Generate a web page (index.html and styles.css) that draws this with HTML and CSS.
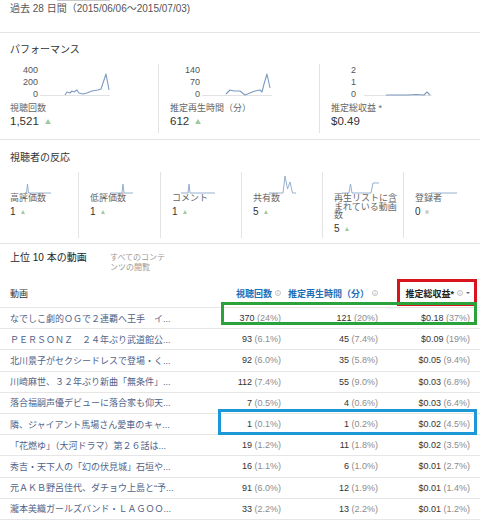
FILE: index.html
```html
<!DOCTYPE html>
<html lang="ja">
<head>
<meta charset="utf-8">
<title>アナリティクス</title>
<link rel="stylesheet" href="styles.css">
</head>
<body>
<header class="period">
  <div class="period-cut"></div>
  <div class="period-text">過去 28 日間（2015/06/06～2015/07/03)</div>
</header>

<section class="card perf">
  <h2 class="card-title">パフォーマンス</h2>
  <div class="perf-grid">
    <div class="perf-col">
      <div class="chart">
        <div class="axis axis-a"><span>400</span><span>200</span><span>0</span></div>
        <svg class="spark" width="72" height="36" viewBox="0 0 72 36">
          <line class="base" x1="0" y1="31.5" x2="70" y2="31.5"/>
          <polyline class="trend" points="25,31 27,28 30,29 32,27 34,28 37,26 39,29 43,30 47,29 52,27 58,26 61,25 66,10 69,26"/>
        </svg>
      </div>
      <div class="metric-label">視聴回数</div>
      <div class="metric-value">1,521<span class="up"></span></div>
    </div>
    <div class="perf-col">
      <div class="chart">
        <div class="axis axis-b"><span>140</span><span>70</span><span>0</span></div>
        <svg class="spark" width="72" height="36" viewBox="0 0 72 36">
          <line class="base" x1="0" y1="31.5" x2="70" y2="31.5"/>
          <polyline class="trend" points="24,30 28,26 32,27 38,27 43,31 48,29 53,27 58,26 60,28 62,20 65,10 68,24"/>
        </svg>
      </div>
      <div class="metric-label">推定再生時間（分）</div>
      <div class="metric-value">612<span class="up"></span></div>
    </div>
    <div class="perf-col">
      <div class="chart">
        <div class="axis axis-c"><span>2</span><span>1</span><span>0</span></div>
        <svg class="spark" width="78" height="36" viewBox="0 0 78 36">
          <line class="base" x1="6" y1="31.5" x2="74" y2="31.5"/>
          <polyline class="trend" points="28,31 50,31 58,30.5 66,31 69,28 72,31"/>
        </svg>
      </div>
      <div class="metric-label">推定総収益 *</div>
      <div class="metric-value">$0.49</div>
    </div>
  </div>
</section>

<section class="card engage">
  <h2 class="card-title">視聴者の反応</h2>
  <div class="engage-grid">
    <div class="eng-col">
      <svg class="mini" width="60" height="22" viewBox="0 0 60 22">
        <polyline points="15,21 16.5,21 17.5,12 18.5,21 41,21"/>
      </svg>
      <div class="eng-label">高評価数</div>
      <div class="eng-value">1<span class="up small"></span></div>
    </div>
    <div class="eng-col">
      <svg class="mini" width="60" height="22" viewBox="0 0 60 22">
        <polyline points="20,21 32,21 33,12 34,21 43,21"/>
      </svg>
      <div class="eng-label">低評価数</div>
      <div class="eng-value">1<span class="up small"></span></div>
    </div>
    <div class="eng-col">
      <svg class="mini" width="60" height="22" viewBox="0 0 60 22">
        <polyline points="9,21 16,21 17,12 18,21 43,21"/>
      </svg>
      <div class="eng-label">コメント</div>
      <div class="eng-value">1<span class="up small"></span></div>
    </div>
    <div class="eng-col">
      <svg class="mini" width="60" height="22" viewBox="0 0 60 22">
        <polyline points="16,21 30,21 32,4 34.5,17 37,10 39.5,21 43,21"/>
      </svg>
      <div class="eng-label">共有数</div>
      <div class="eng-value">5<span class="up small"></span></div>
    </div>
    <div class="eng-col">
      <svg class="mini" width="60" height="22" viewBox="0 0 60 22">
        <polyline points="8,21 15,21 16.5,12 18,21 37,21 39,11 45,11"/>
      </svg>
      <div class="eng-label">再生リストに含まれている動画数</div>
      <div class="eng-value">5<span class="up small"></span></div>
    </div>
    <div class="eng-col">
      <svg class="mini" width="60" height="22" viewBox="0 0 60 22">
        <polyline points="16,21 42,21"/>
      </svg>
      <div class="eng-label">登録者</div>
      <div class="eng-value">0<span class="dot"></span></div>
    </div>
  </div>
</section>

<section class="top-head">
  <h2 class="top-title">上位 10 本の動画</h2>
  <div class="top-tab">すべてのコンテンツの閲覧</div>
</section>

<section class="videos">
  <div class="vrow vhead">
    <div class="hd">動画</div>
    <div class="hd num hd-blue">視聴回数<svg class="info" width="6" height="6" viewBox="0 0 6 6"><circle cx="3" cy="3" r="2.5"/><line x1="3" y1="2.6" x2="3" y2="4.5"/><line x1="3" y1="1.4" x2="3" y2="1.9"/></svg></div>
    <div class="hd num hd-blue">推定再生時間（分）<svg class="info" width="6" height="6" viewBox="0 0 6 6"><circle cx="3" cy="3" r="2.5"/><line x1="3" y1="2.6" x2="3" y2="4.5"/><line x1="3" y1="1.4" x2="3" y2="1.9"/></svg></div>
    <div class="hd num hd-dark">推定総収益*<svg class="info" width="6" height="6" viewBox="0 0 6 6"><circle cx="3" cy="3" r="2.5"/><line x1="3" y1="2.6" x2="3" y2="4.5"/><line x1="3" y1="1.4" x2="3" y2="1.9"/></svg><span class="caret"></span></div>
  </div>

  <div class="vrow item"><div class="vt">なでしこ劇的ＯＧで２連覇へ王手　イ...</div><div class="num">370 <span class="pct">(24%)</span></div><div class="num">121 <span class="pct">(20%)</span></div><div class="num">$0.18 <span class="pct">(37%)</span></div></div>
  <div class="vrow item"><div class="vt">ＰＥＲＳＯＮＺ　２４年ぶり武道館公...</div><div class="num">93 <span class="pct">(6.1%)</span></div><div class="num">45 <span class="pct">(7.4%)</span></div><div class="num">$0.09 <span class="pct">(19%)</span></div></div>
  <div class="vrow item"><div class="vt">北川景子がセクシードレスで登場・く...</div><div class="num">92 <span class="pct">(6.0%)</span></div><div class="num">35 <span class="pct">(5.8%)</span></div><div class="num">$0.05 <span class="pct">(9.4%)</span></div></div>
  <div class="vrow item"><div class="vt">川崎麻世、３２年ぶり新曲「無条件」...</div><div class="num">112 <span class="pct">(7.4%)</span></div><div class="num">55 <span class="pct">(9.0%)</span></div><div class="num">$0.03 <span class="pct">(6.8%)</span></div></div>
  <div class="vrow item"><div class="vt">落合福嗣声優デビューに落合家も仰天...</div><div class="num">7 <span class="pct">(0.5%)</span></div><div class="num">4 <span class="pct">(0.6%)</span></div><div class="num">$0.03 <span class="pct">(6.4%)</span></div></div>
  <div class="vrow item"><div class="vt">隣、ジャイアント馬場さん愛車のキャ...</div><div class="num">1 <span class="pct">(0.1%)</span></div><div class="num">1 <span class="pct">(0.2%)</span></div><div class="num">$0.02 <span class="pct">(4.5%)</span></div></div>
  <div class="vrow item"><div class="vt">「花燃ゆ」（大河ドラマ）第２６話は...</div><div class="num">19 <span class="pct">(1.2%)</span></div><div class="num">11 <span class="pct">(1.8%)</span></div><div class="num">$0.02 <span class="pct">(3.5%)</span></div></div>
  <div class="vrow item"><div class="vt">秀吉・天下人の「幻の伏見城」石垣や...</div><div class="num">16 <span class="pct">(1.1%)</span></div><div class="num">6 <span class="pct">(1.0%)</span></div><div class="num">$0.01 <span class="pct">(2.7%)</span></div></div>
  <div class="vrow item"><div class="vt">元ＡＫＢ野呂佳代、ダチョウ上島と“予...</div><div class="num">91 <span class="pct">(6.0%)</span></div><div class="num">12 <span class="pct">(1.9%)</span></div><div class="num">$0.01 <span class="pct">(1.4%)</span></div></div>
  <div class="vrow item last"><div class="vt">瀧本美織ガールズバンド・ＬＡＧＯＯ...</div><div class="num">33 <span class="pct">(2.2%)</span></div><div class="num">13 <span class="pct">(2.2%)</span></div><div class="num">$0.01 <span class="pct">(1.2%)</span></div></div>

  <div class="mark mark-red"></div>
  <div class="mark mark-green"></div>
  <div class="mark mark-blue"></div>
</section>
</body>
</html>
```

FILE: styles.css
```css
* { box-sizing: border-box; }

html, body { margin: 0; padding: 0; }

body {
  width: 480px;
  height: 526px;
  overflow: hidden;
  background: #fff;
  color: #333;
  font-family: "Liberation Sans", Arial, "Noto Sans CJK JP", sans-serif;
}

/* period header */
.period {
  height: 33px;
  border-bottom: 1px solid #e3e3e3;
  padding-left: 10px;
}
.period-cut {
  height: 1px;
  width: 53px;
  margin-left: 47px;
  background: #c9c9c9;
}
.period-text {
  font-size: 10px;
  line-height: 16px;
  color: #555;
}

/* cards */
.card {
  border-bottom: 1px solid #e3e3e3;
  padding-left: 10px;
}
.card-title {
  margin: 0;
  font-size: 10px;
  font-weight: normal;
  line-height: 14px;
  color: #333;
}

/* performance */
.perf {
  height: 107px;
  padding-top: 10px;
}
.perf-grid {
  margin-top: 7px;
  height: 69px;
  display: grid;
  grid-template-columns: 148px 161px 1fr;
}
.perf-col + .perf-col {
  border-left: 1px solid #e3e3e3;
  padding-left: 11px;
}
.chart {
  display: flex;
  height: 36px;
}
.axis {
  display: flex;
  flex-direction: column;
  text-align: right;
  font-size: 9px;
  line-height: 12px;
  color: #555;
}
.axis-a { width: 28px; }
.axis-b { width: 30px; }
.axis-c { width: 25px; }
.spark { display: block; margin-left: 2px; }
.spark .base { stroke: #e2e2e2; stroke-width: 1; }
.spark .trend { fill: none; stroke: #7d9bc0; stroke-width: 1.1; stroke-linejoin: round; }

.metric-label {
  margin-top: 2px;
  font-size: 9px;
  line-height: 12px;
  color: #666;
}
.metric-value {
  font-size: 11.5px;
  line-height: 14px;
  color: #333;
}

.up {
  display: inline-block;
  width: 0;
  height: 0;
  margin-left: 6px;
  border-left: 3px solid transparent;
  border-right: 3px solid transparent;
  border-bottom: 5px solid #9fcc9f;
  vertical-align: 1px;
}
.up.small {
  margin-left: 5px;
  border-left-width: 2.5px;
  border-right-width: 2.5px;
  border-bottom-width: 4.5px;
}
.dot {
  display: inline-block;
  width: 4px;
  height: 4px;
  margin-left: 4px;
  border-radius: 50%;
  background: #cfcfcf;
  vertical-align: 1px;
}

/* engagement */
.engage {
  height: 104px;
  padding-top: 11px;
}
.engage-grid {
  margin-top: 7px;
  height: 66px;
  display: grid;
  grid-template-columns: 68px 82px 81px 81px 81px 1fr;
}
.eng-col + .eng-col {
  border-left: 1px solid #e3e3e3;
  padding-left: 11px;
}
.mini { display: block; }
.mini polyline {
  fill: none;
  stroke: #8aa7c9;
  stroke-width: 0.9;
  stroke-linejoin: round;
}
.eng-label {
  font-size: 9px;
  line-height: 8.6px;
  color: #666;
  padding-right: 4px;
}
.eng-value {
  margin-top: 3.5px;
  font-size: 10px;
  line-height: 12px;
  color: #333;
}

/* top videos */
.top-head {
  height: 35px;
  padding: 7px 0 0 10px;
  display: flex;
  align-items: flex-start;
}
.top-title {
  margin: 0;
  width: 100px;
  font-size: 10px;
  font-weight: normal;
  line-height: 14px;
  color: #222;
}
.top-tab {
  width: 58px;
  margin-top: 2px;
  font-size: 8px;
  line-height: 10px;
  color: #9a9a9a;
}

.videos { position: relative; }

.vrow {
  display: grid;
  grid-template-columns: 190px 81px 97px 92px;
  padding: 0 10px;
  align-items: center;
  font-size: 9px;
  white-space: nowrap;
}
.vhead { height: 28px; }
.item {
  height: 21.2px;
  border-top: 1px solid #e6e6e6;
}
.item.last { border-bottom: 1px solid #e6e6e6; height: 22.2px; }

.hd { color: #333; }
.num { text-align: right; color: #333; }
.hd.num {
  display: flex;
  justify-content: flex-end;
  align-items: center;
}
.hd-blue { color: #1b6fb8; font-weight: bold; }
.hd-dark { color: #222; font-weight: bold; }
.info { display: block; margin-left: 3px; }
.info circle { fill: none; stroke: #b5b5b5; stroke-width: 0.8; }
.info line { stroke: #b5b5b5; stroke-width: 0.8; }
.caret {
  display: block;
  width: 0;
  height: 0;
  margin-left: 3px;
  border-left: 2px solid transparent;
  border-right: 2px solid transparent;
  border-top: 2.5px solid #666;
}

.vt { color: #4f6389; overflow: hidden; }
.pct { color: #8c8c8c; }

/* annotation boxes */
.mark {
  position: absolute;
  border-style: solid;
  border-width: 3px;
  pointer-events: none;
}
.mark-red { top: 0; left: 397px; width: 80px; height: 27px; border-color: #d8141c; }
.mark-green { top: 23px; left: 221px; width: 256px; height: 23px; border-color: #2ba33c; }
.mark-blue { top: 130px; left: 218px; width: 259px; height: 26px; border-color: #1b98d5; }
```
